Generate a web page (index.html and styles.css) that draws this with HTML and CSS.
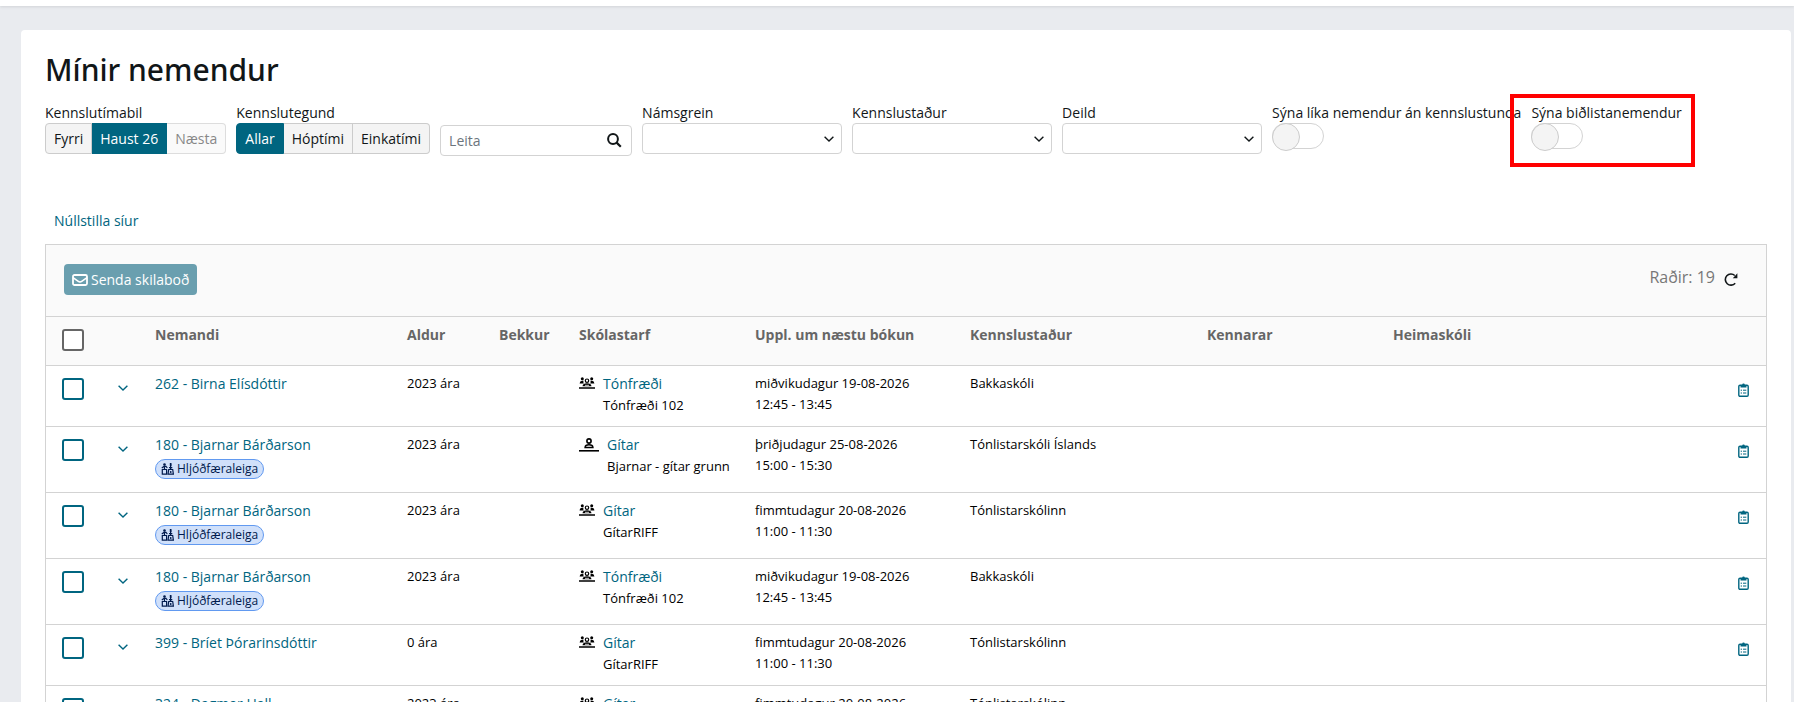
FILE: index.html
```
<!DOCTYPE html>
<html lang="is">
<head>
  <meta charset="UTF-8" />
  <meta name="viewport" content="width=device-width, initial-scale=1.0" />
  <title>Mínir nemendur</title>
  <link rel="stylesheet" href="styles.css">
</head>
<body>
  <!-- shared icons -->
  <svg class="sprite" aria-hidden="true">
    <symbol id="i-search" viewBox="0 0 15 15">
      <circle cx="6" cy="6" r="4.9" fill="none" stroke="currentColor" stroke-width="2" />
      <path d="M9.6 9.6l4.2 4.2" stroke="currentColor" stroke-width="2.2" />
    </symbol>
    <symbol id="i-chevron" viewBox="0 0 10 6">
      <path d="M.6.7L5 5 9.4.7" fill="none" stroke="currentColor" stroke-width="1.4" />
    </symbol>
    <symbol id="i-mail" viewBox="0 0 16 12">
      <rect x="1" y="1" width="14" height="10" rx="1.5" fill="none" stroke="currentColor" stroke-width="1.8" />
      <path d="M1 3.6l5.3 3.8q1.7 1.2 3.4 0L15 3.6" fill="none" stroke="currentColor" stroke-width="1.6" />
    </symbol>
    <symbol id="i-refresh" viewBox="0 0 14 14">
      <path d="M11.2 11.2A5.6 5.6 0 1 1 10.8 3.5" fill="none" stroke="currentColor" stroke-width="1.6" />
      <path d="M13.4 1.2v5H8.8z" fill="currentColor" />
    </symbol>
    <symbol id="i-group" viewBox="0 0 16 12">
      <g fill="currentColor">
        <circle cx="3.3" cy="1.7" r="1.5" />
        <circle cx="12.7" cy="1.7" r="1.5" />
        <path d="M.6 6.4Q.8 3.8 3 3.8h1.6Q3.9 5 4.8 6.4zM15.4 6.4Q15.2 3.8 13 3.8h-1.6Q12.1 5 11.2 6.4z" />
        <path d="M3.5 9.2Q3.8 6.2 8 6.2t4.5 3zM0 10.2h16v1.5H0z" />
      </g>
      <circle cx="8" cy="3.7" r="1.7" fill="none" stroke="currentColor" stroke-width="1.2" />
      <path d="M6 8.3h4" stroke="#fff" stroke-width=".8" />
    </symbol>
    <symbol id="i-single" viewBox="0 0 20 14">
      <circle cx="10" cy="3" r="2.1" fill="none" stroke="currentColor" stroke-width="1.6" />
      <path d="M6.1 9.4Q6.3 6.8 10 6.8t3.9 2.6z" fill="none" stroke="currentColor" stroke-width="1.5" />
      <path d="M0 12h20v1.6H0z" fill="currentColor" />
    </symbol>
    <symbol id="i-clipboard" viewBox="0 0 11 14">
      <rect x=".8" y="2.2" width="9.4" height="11.1" rx="1.2" fill="none" stroke="currentColor" stroke-width="1.4" />
      <path d="M2.5 4.4V1.900h1.700a1.300 1.300 0 0 1 2.600 0h1.700v2.500z" fill="currentColor" />
      <path d="M2.700 7.200H4M5 7.200h3.300M2.700 10H4M5 10h3.300" stroke="currentColor" stroke-width="1" />
    </symbol>
    <symbol id="i-rental" viewBox="0 0 13 12">
      <g fill="none" stroke="currentColor" stroke-width="1.2">
        <path d="M3.5 2.5v4M.8 5L3 3.3h2L6.3 5M1.3 6.5h4.3v4.700H1.300z" />
        <path d="M9.600 1v5.500M7.700 6.500h4l.7 4.700H7zM8 4.600h3.300" />
      </g>
      <circle cx="3.5" cy="1.5" r="1.3" fill="currentColor" />
      <path d="M8.8 0h1.700v3H8.800z" fill="currentColor" />
      <circle cx="9.7" cy="9" r=".9" fill="currentColor" />
    </symbol>
  </svg>

  <header class="topbar"></header>

  <main class="card">
    <h1>Mínir nemendur</h1>

    <div class="filters">
      <div class="filter">
        <span class="filter-label" id="periodLabel">Kennslutímabil</span>
        <div class="btn-group" role="group" aria-labelledby="periodLabel">
          <button type="button">Fyrri</button>
          <button type="button" class="active">Haust 26</button>
          <button type="button" disabled>Næsta</button>
        </div>
      </div>
      <div class="filter">
        <span class="filter-label" id="typeLabel">Kennslutegund</span>
        <div class="btn-group" role="group" aria-labelledby="typeLabel">
          <button type="button" class="active">Allar</button>
          <button type="button">Hóptími</button>
          <button type="button">Einkatími</button>
        </div>
      </div>
      <div class="search">
        <input type="text" placeholder="Leita" aria-label="Leita" />
        <button type="button" aria-label="Leita"><svg width="15" height="15"><use href="#i-search" /></svg></button>
      </div>
      <div class="filter">
        <label for="subject">Námsgrein</label>
        <div class="select">
          <select id="subject"><option></option></select>
          <svg width="10" height="6"><use href="#i-chevron" /></svg>
        </div>
      </div>
      <div class="filter">
        <label for="location">Kennslustaður</label>
        <div class="select">
          <select id="location"><option></option></select>
          <svg width="10" height="6"><use href="#i-chevron" /></svg>
        </div>
      </div>
      <div class="filter">
        <label for="department">Deild</label>
        <div class="select">
          <select id="department"><option></option></select>
          <svg width="10" height="6"><use href="#i-chevron" /></svg>
        </div>
      </div>
      <div class="filter">
        <label for="noLessons">Sýna líka nemendur án kennslustunda</label>
        <input type="checkbox" class="toggle" id="noLessons" />
      </div>
      <div class="filter highlighted">
        <label for="waitlist">Sýna biðlistanemendur</label>
        <input type="checkbox" class="toggle" id="waitlist" />
      </div>
    </div>

    <a href="#" class="reset">Núllstilla síur</a>

    <div class="grid">
      <div class="toolbar">
        <button type="button" class="send" disabled><svg width="16" height="12"><use href="#i-mail" /></svg>Senda skilaboð</button>
        <div class="row-count">
          <span>Raðir: 19</span>
          <button type="button" class="icon-btn" aria-label="Endurhlaða"><svg width="14" height="14"><use href="#i-refresh" /></svg></button>
        </div>
      </div>

      <table>
        <colgroup>
          <col class="c-check"><col class="c-expand"><col class="c-name"><col class="c-age"><col class="c-class"><col class="c-activity"><col class="c-next"><col class="c-place"><col class="c-teachers"><col class="c-school"><col class="c-actions">
        </colgroup>
        <thead>
          <tr>
            <th class="check"><input type="checkbox" aria-label="Velja alla" /></th>
            <th></th>
            <th>Nemandi</th>
            <th>Aldur</th>
            <th>Bekkur</th>
            <th>Skólastarf</th>
            <th>Uppl. um næstu bókun</th>
            <th>Kennslustaður</th>
            <th>Kennarar</th>
            <th>Heimaskóli</th>
            <th></th>
          </tr>
        </thead>
        <tbody>
          <tr>
            <td class="check"><input type="checkbox" aria-label="Velja" /></td>
            <td class="expand"><button type="button" class="icon-btn" aria-label="Opna"><svg width="10" height="6"><use href="#i-chevron" /></svg></button></td>
            <td><a href="#">262 - Birna Elísdóttir</a></td>
            <td>2023 ára</td>
            <td></td>
            <td>
              <div class="activity"><svg width="16" height="12"><use href="#i-group" /></svg><div><a href="#">Tónfræði</a><span>Tónfræði 102</span></div></div>
            </td>
            <td>miðvikudagur 19-08-2026<br>12:45 - 13:45</td>
            <td>Bakkaskóli</td>
            <td></td>
            <td></td>
            <td class="actions"><button type="button" class="icon-btn" aria-label="Skrá"><svg width="11" height="14"><use href="#i-clipboard" /></svg></button></td>
          </tr>
          <tr>
            <td class="check"><input type="checkbox" aria-label="Velja" /></td>
            <td class="expand"><button type="button" class="icon-btn" aria-label="Opna"><svg width="10" height="6"><use href="#i-chevron" /></svg></button></td>
            <td><a href="#">180 - Bjarnar Bárðarson</a><span class="badge"><svg width="13" height="12"><use href="#i-rental" /></svg>Hljóðfæraleiga</span></td>
            <td>2023 ára</td>
            <td></td>
            <td>
              <div class="activity"><svg width="20" height="14"><use href="#i-single" /></svg><div><a href="#">Gítar</a><span>Bjarnar - gítar grunn</span></div></div>
            </td>
            <td>þriðjudagur 25-08-2026<br>15:00 - 15:30</td>
            <td>Tónlistarskóli Íslands</td>
            <td></td>
            <td></td>
            <td class="actions"><button type="button" class="icon-btn" aria-label="Skrá"><svg width="11" height="14"><use href="#i-clipboard" /></svg></button></td>
          </tr>
          <tr>
            <td class="check"><input type="checkbox" aria-label="Velja" /></td>
            <td class="expand"><button type="button" class="icon-btn" aria-label="Opna"><svg width="10" height="6"><use href="#i-chevron" /></svg></button></td>
            <td><a href="#">180 - Bjarnar Bárðarson</a><span class="badge"><svg width="13" height="12"><use href="#i-rental" /></svg>Hljóðfæraleiga</span></td>
            <td>2023 ára</td>
            <td></td>
            <td>
              <div class="activity"><svg width="16" height="12"><use href="#i-group" /></svg><div><a href="#">Gítar</a><span>GítarRIFF</span></div></div>
            </td>
            <td>fimmtudagur 20-08-2026<br>11:00 - 11:30</td>
            <td>Tónlistarskólinn</td>
            <td></td>
            <td></td>
            <td class="actions"><button type="button" class="icon-btn" aria-label="Skrá"><svg width="11" height="14"><use href="#i-clipboard" /></svg></button></td>
          </tr>
          <tr>
            <td class="check"><input type="checkbox" aria-label="Velja" /></td>
            <td class="expand"><button type="button" class="icon-btn" aria-label="Opna"><svg width="10" height="6"><use href="#i-chevron" /></svg></button></td>
            <td><a href="#">180 - Bjarnar Bárðarson</a><span class="badge"><svg width="13" height="12"><use href="#i-rental" /></svg>Hljóðfæraleiga</span></td>
            <td>2023 ára</td>
            <td></td>
            <td>
              <div class="activity"><svg width="16" height="12"><use href="#i-group" /></svg><div><a href="#">Tónfræði</a><span>Tónfræði 102</span></div></div>
            </td>
            <td>miðvikudagur 19-08-2026<br>12:45 - 13:45</td>
            <td>Bakkaskóli</td>
            <td></td>
            <td></td>
            <td class="actions"><button type="button" class="icon-btn" aria-label="Skrá"><svg width="11" height="14"><use href="#i-clipboard" /></svg></button></td>
          </tr>
          <tr>
            <td class="check"><input type="checkbox" aria-label="Velja" /></td>
            <td class="expand"><button type="button" class="icon-btn" aria-label="Opna"><svg width="10" height="6"><use href="#i-chevron" /></svg></button></td>
            <td><a href="#">399 - Bríet Þórarinsdóttir</a></td>
            <td>0 ára</td>
            <td></td>
            <td>
              <div class="activity"><svg width="16" height="12"><use href="#i-group" /></svg><div><a href="#">Gítar</a><span>GítarRIFF</span></div></div>
            </td>
            <td>fimmtudagur 20-08-2026<br>11:00 - 11:30</td>
            <td>Tónlistarskólinn</td>
            <td></td>
            <td></td>
            <td class="actions"><button type="button" class="icon-btn" aria-label="Skrá"><svg width="11" height="14"><use href="#i-clipboard" /></svg></button></td>
          </tr>
          <tr>
            <td class="check"><input type="checkbox" aria-label="Velja" /></td>
            <td class="expand"><button type="button" class="icon-btn" aria-label="Opna"><svg width="10" height="6"><use href="#i-chevron" /></svg></button></td>
            <td><a href="#">324 - Dagmar Hall</a></td>
            <td>2023 ára</td>
            <td></td>
            <td>
              <div class="activity"><svg width="16" height="12"><use href="#i-group" /></svg><div><a href="#">Gítar</a><span>GítarRIFF</span></div></div>
            </td>
            <td>fimmtudagur 20-08-2026<br>11:00 - 11:30</td>
            <td>Tónlistarskólinn</td>
            <td></td>
            <td></td>
            <td class="actions"><button type="button" class="icon-btn" aria-label="Skrá"><svg width="11" height="14"><use href="#i-clipboard" /></svg></button></td>
          </tr>
        </tbody>
      </table>
    </div>
  </main>
</body>
</html>
```
FILE: styles.css
```
* { box-sizing: border-box; }
body { margin: 0; height: 100vh; overflow: hidden; background: #e9ebef; color: #111618; font: 14px/21px "Open Sans", "Noto Sans", sans-serif; }
button, input, select { font: inherit; color: inherit; }
button { cursor: pointer; }
a { color: #006580; text-decoration: none; }
svg { display: block; flex: none; }
.sprite { position: absolute; width: 0; height: 0; }

.topbar { height: 6px; background: #fff; box-shadow: 0 1px 3px rgba(0, 0, 0, 0.1); }
.card { margin: 24px 3px 0 21px; padding: 24px; background: #fff; border-radius: 4px; }
h1 { margin: 0 0 16px; font-family: "Noto Sans", "Open Sans", sans-serif; font-size: 30px; line-height: 32px; font-weight: 500; }

/* filters */
.filters { display: flex; align-items: flex-start; gap: 10px; padding-bottom: 49px; }
.filter { white-space: nowrap; }
.filter label, .filter-label { display: block; }
.btn-group { display: flex; }
.btn-group button { padding: 4px 8px; border: 1px solid #ccc; border-left-width: 0; background: #f4f4f4; }
.btn-group button:first-child { border-left-width: 1px; border-radius: 4px 0 0 4px; }
.btn-group button:last-child { border-radius: 0 4px 4px 0; }
.btn-group .active { background: #006580; border-color: #006580; color: #fff; }
.btn-group button:disabled { background: #fafafa; border-color: #ddd; color: #888; }

.search { display: flex; align-items: center; width: 192px; height: 31px; margin-top: 23px; border: 1px solid #d3d3d3; border-radius: 4px; }
.search input { flex: 1; min-width: 0; padding: 4px 8px; border: 0; background: none; outline: 0; }
.search input::placeholder { color: #6c757d; }
.search button { padding: 0 9px; border: 0; background: none; }

.select { display: grid; align-items: center; width: 200px; }
.select select, .select svg { grid-area: 1 / 1; }
.select select { width: 100%; height: 31px; padding: 4px 8px; border: 1px solid #d3d3d3; border-radius: 4px; background: #fff; appearance: none; }
.select svg { justify-self: end; margin-right: 8px; pointer-events: none; }

.toggle { display: block; width: 52px; height: 26px; margin: 0; border: 1px solid #d3d3d3; border-radius: 13px; background: #fff; appearance: none; }
.toggle::before { content: ""; display: block; width: 26px; height: 26px; margin: -1px; border: 1px solid #ccc; border-radius: 50%; background: #f4f4f4; }
.toggle:checked::before { margin-left: 25px; }

.highlighted { position: relative; }
.highlighted::after { content: ""; position: absolute; top: -8px; left: -21px; right: -13px; bottom: -18px; border: 4px solid #f00; pointer-events: none; }

.reset { display: inline-block; padding: 5px 9px; margin-bottom: 8px; vertical-align: top; }

/* student table */
.grid { border: 1px solid #d3d3d3; }
.toolbar { display: flex; justify-content: space-between; align-items: flex-start; padding: 19px 28px 21px 18px; border-bottom: 1px solid #d3d3d3; background: #fafafa; }
.send { display: flex; align-items: center; gap: 3px; padding: 5px 8px; border: 0; border-radius: 4px; background: #6a9faf; color: #fff; }
.row-count { display: flex; align-items: center; gap: 9px; color: #777; font-size: 16px; line-height: 26px; }
.row-count .icon-btn { color: #111618; padding-top: 3px; }
.icon-btn { display: block; padding: 0; border: 0; background: none; color: #006580; }

table { width: 100%; table-layout: fixed; border-collapse: separate; border-spacing: 0; }
.c-check { width: 64px; }
.c-expand { width: 37px; }
.c-name { width: 252px; }
.c-age { width: 92px; }
.c-class { width: 80px; }
.c-activity { width: 176px; }
.c-next { width: 215px; }
.c-place { width: 237px; }
.c-teachers { width: 186px; }
.c-school { width: 337px; }
.c-actions { width: 44px; }
th, td { padding: 7px 8px 10px; border-bottom: 1px solid #d3d3d3; text-align: left; vertical-align: top; white-space: nowrap; }
th { height: 49px; background: #fafafa; color: #666; font-weight: 700; }
td { height: 61px; color: #000; font-size: 13px; }
td a { display: block; font-size: 14px; }
.check { padding: 12px 0 0 16px; }
.check input { display: block; width: 22px; height: 22px; margin: 0; border: 2px solid #006580; border-radius: 3px; background: #fff; appearance: none; }
th.check input { border-color: #666; }
.expand { padding-top: 19px; }
.actions { padding: 17px 16px 0; }
.activity { display: flex; gap: 8px; }
.activity > svg { margin-top: 4px; }
.activity span { display: block; line-height: 22px; }
.badge { display: flex; align-items: center; gap: 3px; width: fit-content; height: 20px; margin: 4px 0 3px; padding: 0 5px; border: 1px solid #6199f0; border-radius: 10px; background: #d0e0fa; color: #001a4d; font-size: 12px; line-height: 18px; }
```
